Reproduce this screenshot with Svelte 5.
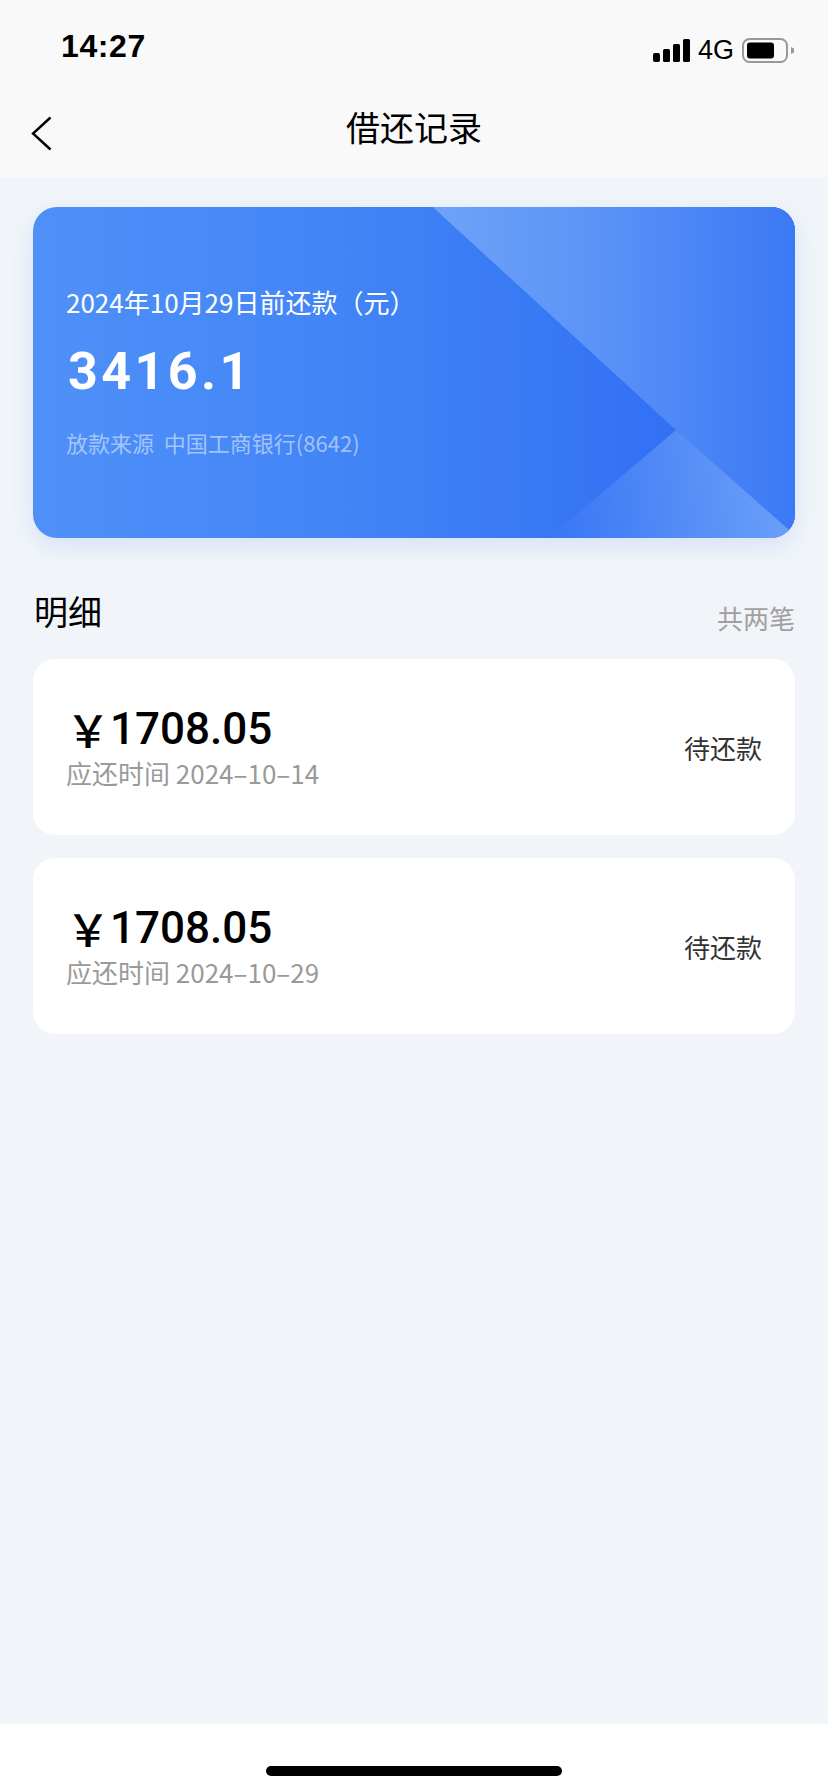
<script>
  const bills = [
    { amount: '1708.05', due: '2024-10-14' },
    { amount: '1708.05', due: '2024-10-29' }
  ];
</script>

<div class="page">
  <header>
    <div class="status">
      <span class="time">14:27</span>
      <div class="indicators">
        <svg class="signal" width="37" height="23" viewBox="0 0 37 23">
          <rect x="0" y="14" width="7" height="9" rx="2" />
          <rect x="10" y="10" width="7" height="13" rx="1.5" />
          <rect x="20" y="5" width="7" height="18" rx="1.5" />
          <rect x="30" y="0" width="7" height="23" rx="1.5" />
        </svg>
        <span class="net">4G</span>
        <svg class="battery" width="52" height="25" viewBox="0 0 52 25">
          <rect x="1" y="1" width="44" height="23" rx="6.5" fill="none" stroke="#999" stroke-width="2" />
          <rect x="5" y="4.5" width="27" height="16" rx="3" fill="#000" />
          <path d="M49 9l3 1.5v4l-3 1.5z" fill="#999" />
        </svg>
      </div>
    </div>
    <nav>
      <svg class="back" width="21" height="35" viewBox="0 0 21 35">
        <path d="M19.5 1.5L2 17.5l17.5 16" fill="none" stroke="#000" stroke-width="2.4" />
      </svg>
      <h1>借还记录</h1>
    </nav>
  </header>

  <main>
    <section class="summary">
      <svg class="facets" width="762" height="331" viewBox="0 0 762 331">
        <defs>
          <linearGradient id="top" x1="400" y1="0" x2="762" y2="0" gradientUnits="userSpaceOnUse">
            <stop offset="0" stop-color="#6fa3f8" />
            <stop offset="0.45" stop-color="#5b93f7" />
            <stop offset="1" stop-color="#3b79f5" />
          </linearGradient>
          <linearGradient id="low" x1="530" y1="331" x2="762" y2="300" gradientUnits="userSpaceOnUse">
            <stop offset="0" stop-color="#3a78f5" />
            <stop offset="1" stop-color="#6ca0f8" />
          </linearGradient>
        </defs>
        <path d="M400 0H762V331Z" fill="url(#top)" />
        <path d="M400 0L643 223L762 331V0Z" fill="url(#top)" />
        <path d="M643 223L765 331H516Z" fill="url(#low)" />
      </svg>
      <div class="summary-text">
        <p class="due">2024年10月29日前还款（元）</p>
        <p class="total">3416.1</p>
        <p class="source">放款来源&nbsp;&nbsp;中国工商银行(8642)</p>
      </div>
    </section>

    <div class="detail-head">
      <h2>明细</h2>
      <span>共两笔</span>
    </div>

    <div class="bills">
      {#each bills as bill}
        <div class="bill">
          <div>
            <div class="amount"><span class="yen">￥</span>{bill.amount}</div>
            <div class="date">应还时间&nbsp;{bill.due.replace(/-/g, '–')}</div>
          </div>
          <span class="state">待还款</span>
        </div>
      {/each}
    </div>
  </main>

  <footer><span class="home"></span></footer>
</div>

<style>
  :global(body) {
    margin: 0;
    background: #f1f5f9;
  }

  .page {
    width: 828px;
    height: 1792px;
    display: flex;
    flex-direction: column;
    overflow: hidden;
    font-family: "Noto Sans CJK SC", "Liberation Sans", sans-serif;
    color: #000;
  }

  header {
    height: 177px;
    background: #f9f9f9;
    flex-shrink: 0;
  }

  .status {
    height: 88px;
    padding: 0 34px 0 61px;
    display: flex;
    align-items: center;
    justify-content: space-between;
    box-sizing: border-box;
  }
  .time {
    font-family: "Liberation Sans", sans-serif;
    font-size: 32px;
    font-weight: 700;
    letter-spacing: 0.6px;
    padding-top: 4px;
  }
  .indicators {
    display: flex;
    align-items: center;
    gap: 8px;
    padding-top: 12px;
  }
  .net {
    font-family: "Liberation Sans", sans-serif;
    font-size: 27px;
    line-height: 25px;
  }

  nav {
    height: 89px;
    display: flex;
    align-items: center;
    justify-content: center;
    position: relative;
  }
  .back {
    position: absolute;
    left: 31px;
    top: 28px;
  }
  h1 {
    margin: 0;
    font-size: 34px;
    font-weight: 400;
    line-height: 1;
    padding-bottom: 12px;
  }

  main {
    flex: 1;
    padding: 30px 33px 0;
  }

  .summary {
    height: 331px;
    border-radius: 24px;
    position: relative;
    overflow: hidden;
    background: linear-gradient(90deg, #4f90f8 0%, #4285f6 40%, #3170f4 85%);
    box-shadow: 0 8px 24px rgba(60, 110, 240, 0.14);
    display: flex;
    align-items: center;
  }
  .facets {
    position: absolute;
    top: 0;
    left: 0;
  }
  .summary-text {
    position: relative;
    padding: 0 0 5px 33px;
  }
  .summary p {
    margin: 0;
    color: #fff;
  }
  .due {
    font-size: 26px;
    line-height: 36px;
  }
  .total {
    font-family: "Roboto", sans-serif;
    font-size: 52px;
    font-weight: 700;
    letter-spacing: 3.4px;
    line-height: 60px;
    margin-top: 22px !important;
    padding-left: 2px;
  }
  .summary .source {
    font-size: 22px;
    line-height: 30px;
    margin-top: 25px;
    color: rgba(255, 255, 255, 0.5);
  }

  .detail-head {
    display: flex;
    justify-content: space-between;
    align-items: flex-end;
    margin-top: 38px;
    height: 60px;
  }
  h2 {
    margin: 0 0 0 1px;
    font-size: 34px;
    font-weight: 400;
    line-height: 50px;
  }
  .detail-head span {
    font-size: 26px;
    line-height: 36px;
    color: #a0a0a0;
  }

  .bills {
    margin-top: 23px;
    display: flex;
    flex-direction: column;
    gap: 23px;
  }
  .bill {
    height: 176px;
    box-sizing: border-box;
    padding: 0 33px;
    background: #fff;
    border-radius: 22px;
    display: flex;
    align-items: center;
    justify-content: space-between;
  }
  .amount {
    font-family: "Roboto", sans-serif;
    font-size: 44px;
    font-weight: 500;
    line-height: 50px;
    display: flex;
    align-items: center;
  }
  .yen {
    font-family: "Noto Sans CJK SC", sans-serif;
    width: 44px;
  }
  .date {
    font-size: 26px;
    line-height: 36px;
    color: #9a9a9a;
    margin-top: 1px;
  }
  .state {
    font-size: 26px;
    color: #333;
  }

  footer {
    height: 68px;
    background: #fff;
    flex-shrink: 0;
    display: flex;
    justify-content: center;
    padding-top: 42px;
    box-sizing: border-box;
  }
  .home {
    width: 296px;
    height: 10px;
    border-radius: 5px;
    background: #000;
  }
</style>
